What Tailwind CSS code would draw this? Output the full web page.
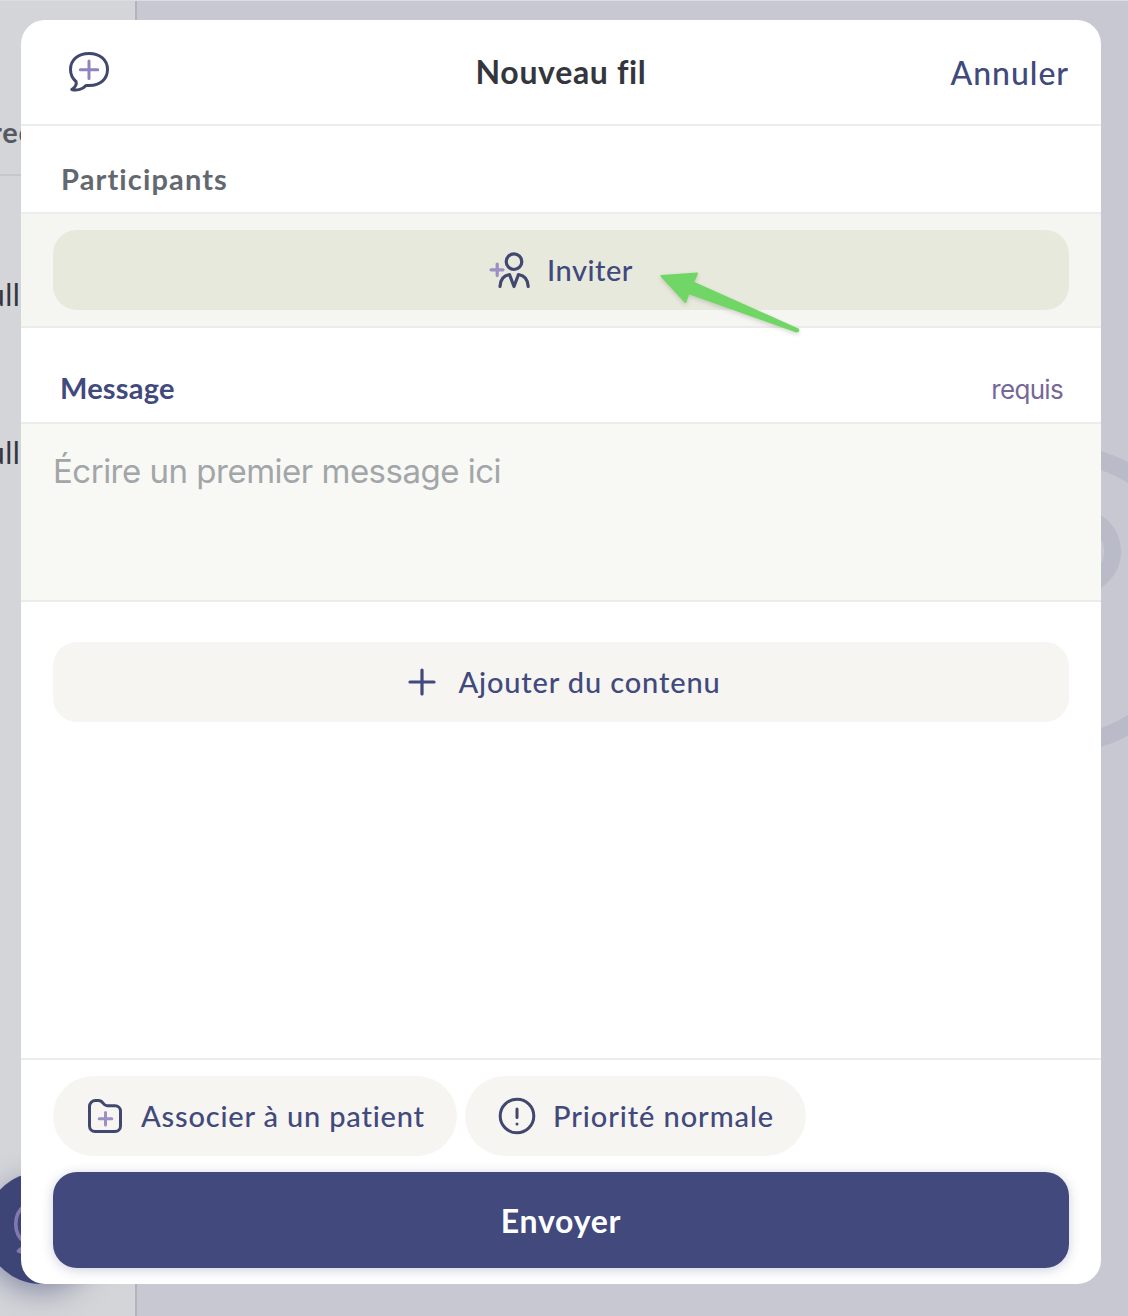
<!DOCTYPE html>
<html lang="fr">
<head>
<meta charset="utf-8">
<title>Nouveau fil</title>
<script src="https://cdn.jsdelivr.net/npm/@tailwindcss/browser@4"></script>
</head>
<body class="relative h-[1316px] w-[1128px] overflow-hidden bg-[#c8c8d2] font-['Lato',sans-serif] text-[#41497d]">

<!-- Page behind the dialog -->
<aside class="absolute inset-y-0 left-0 w-[137px] overflow-hidden border-r-2 border-[#b3b3be] bg-[#d4d5d9] text-[#33363d]">
  <div class="flex h-[176px] items-end border-b-2 border-[#c6c7cc] pb-[26px]">
    <span class="-ml-[9px] text-[29px] leading-[32px] font-bold tracking-[0.8px] text-[#555962]">rec</span>
  </div>
  <p class="-ml-[12px] mt-[102px] text-[30px] leading-[32px] tracking-[0.5px]">ull</p>
  <p class="-ml-[12px] mt-[126px] text-[30px] leading-[32px] tracking-[0.5px]">ull</p>
</aside>
<svg class="absolute right-0 top-[440px]" width="60" height="320" viewBox="1068 440 60 320" fill="none" stroke="#b9bbc8">
  <circle cx="1056" cy="599" r="145.6" stroke-width="18"/>
  <circle cx="1077.7" cy="551.5" r="34.8" stroke-width="17"/>
</svg>
<div class="absolute -left-[15px] top-[1172px] size-[112px] rounded-full bg-[#3d4576] shadow-[0_8px_28px_rgba(61,69,118,0.5)]">
  <svg class="absolute left-[27px] top-[32px]" width="48" height="52" viewBox="0 0 48 52" fill="none" stroke="#8377b1" stroke-width="3.6" stroke-linecap="round" stroke-linejoin="round">
    <path d="M12 2C1 11 1 29 12 38M12 43c-2 1-4 2-5.500 4 3 1 6 1 9 0"/>
  </svg>
</div>
<div class="absolute inset-x-0 top-0 h-px bg-[#dcdde3]"></div>

<!-- Dialog -->
<main class="absolute left-[21px] top-[20px] flex h-[1264px] w-[1080px] flex-col overflow-hidden rounded-[24px] bg-white">
  <header class="grid h-[106px] shrink-0 grid-cols-3 items-center border-b-2 border-[#ecedee] px-[32px]">
    <svg class="ml-[14px] mt-[2px]" width="44" height="44" viewBox="0 0 44 44" fill="none" stroke="#41476f" stroke-width="3" stroke-linecap="round" stroke-linejoin="round">
      <path d="M9 30.500C5.500 27.500 3.500 23.500 3.500 18.500 3.500 9 11 2.500 22 2.500S40.500 9 40.500 18.500 33 34.500 22.500 34.500H19C16 38 10 40 4.800 38.500 8 36.500 10 34 9 30.500Z"/>
      <path stroke="#9183be" d="M22 10v17.500M13.300 18.700h17.500"/>
    </svg>
    <h1 class="text-center text-[32px] leading-[40px] font-bold tracking-[0.65px] text-[#33363d]">Nouveau fil</h1>
    <button class="justify-self-end pt-[2px] text-[32px] leading-[40px] font-medium tracking-[0.95px]">Annuler</button>
  </header>

  <h2 class="flex h-[88px] shrink-0 items-end border-b-2 border-[#ececea] px-[40px] pb-[15px] text-[29px] leading-[36px] font-bold tracking-[1.13px] text-[#62686f]">Participants</h2>
  <section class="h-[114px] shrink-0 border-b-2 border-[#ebece9] bg-[#f5f6f2] px-[32px] pt-[16px]">
    <button class="flex h-[80px] w-full items-center justify-center gap-[16px] rounded-[24px] bg-[#e8e9dd] text-[29px] leading-[36px] font-medium tracking-[0.5px]">
      <svg width="42" height="38" viewBox="0 0 42 38" fill="none" stroke="#41476f" stroke-width="3.200" stroke-linecap="round" stroke-linejoin="round">
        <circle cx="25" cy="10.700" r="7.800"/>
        <path d="M11 35.500C11.200 29 14.500 24.500 20.500 23.500L25 35.500 29.500 23.500C35.500 24.500 39 29 39.200 35.500"/>
        <path stroke="#9b8fc3" d="M8.200 13v11.500M2 18.800h12"/>
      </svg>
      <span>Inviter</span>
    </button>
  </section>

  <div class="flex h-[96px] shrink-0 items-end justify-between border-b-2 border-[#ecedea] pl-[39px] pr-[38px]">
    <h2 class="pb-[16px] text-[29px] leading-[36px] font-bold tracking-[0.2px]">Message</h2>
    <span class="pb-[14px] font-['Inter',sans-serif] text-[26px] leading-[36px] tracking-[-0.7px] text-[#76679a]">requis</span>
  </div>
  <section class="h-[178px] shrink-0 border-b-2 border-[#ebece9] bg-[#f8f9f5] px-[32px] pt-[27px] font-['Inter',sans-serif] text-[33px] leading-[40px] tracking-[-0.5px] text-[#a2a6a8]">Écrire un premier message ici</section>

  <div class="flex-1 px-[32px] pt-[40px]">
    <button class="flex h-[80px] w-full items-center justify-center gap-[22px] rounded-[24px] bg-[#f6f5f2] pl-[7px] text-[29px] leading-[36px] font-medium tracking-[0.85px]">
      <svg width="28" height="28" viewBox="0 0 28 28" fill="none" stroke="currentColor" stroke-width="3.200" stroke-linecap="round"><path d="M14 2v24M2 14h24"/></svg>
      <span>Ajouter du contenu</span>
    </button>
  </div>

  <footer class="h-[226px] shrink-0 border-t-2 border-[#ecedee] px-[32px] pt-[16px]">
    <div class="flex gap-2">
      <button class="flex h-[80px] w-[404px] items-center gap-[18px] rounded-full bg-[#f6f5f2] pl-[34px] text-[29px] leading-[36px] font-medium tracking-[0.82px]">
        <svg class="shrink-0" width="36" height="36" viewBox="0 0 36 36" fill="none" stroke="#41476f" stroke-width="3" stroke-linecap="round" stroke-linejoin="round">
          <path d="M2.500 8.500a6 6 0 0 1 6-6h3C16.500 2.500 15.500 7.700 20 7.700H28a5.500 5.500 0 0 1 5.500 5.500V28a5.500 5.500 0 0 1-5.500 5.500H8a5.500 5.500 0 0 1-5.500-5.500Z"/>
          <path stroke="#9b8fc3" d="M18.500 14.500v12.500M12.200 20.700h12.600"/>
        </svg>
        <span>Associer à un patient</span>
      </button>
      <button class="flex h-[80px] w-[341px] items-center gap-[17px] rounded-full bg-[#f6f5f2] pl-[33px] text-[29px] leading-[36px] font-medium tracking-[0.92px]">
        <svg class="shrink-0" width="38" height="38" viewBox="0 0 38 38" fill="none" stroke="#41476f" stroke-width="3" stroke-linecap="round">
          <circle cx="19" cy="19" r="16.800"/><path d="M19 12v8.500M19 27v.100"/>
        </svg>
        <span>Priorité normale</span>
      </button>
    </div>
    <button class="mt-4 h-[96px] w-full rounded-[24px] bg-[#41497d] pt-[2px] text-[32px] leading-[40px] font-bold tracking-[0.75px] text-white shadow-[0_2px_12px_rgba(65,73,125,0.25)]">Envoyer</button>
  </footer>
</main>

<!-- Pointer arrow -->
<svg class="absolute left-[650px] top-[260px] drop-shadow-[0_2px_2px_rgba(0,0,0,0.15)]" width="160" height="84" viewBox="650 260 160 84" fill="#70d665" stroke="#70d665" stroke-width="2" stroke-linejoin="round">
  <path d="M661.500 276 697 273.500 693 282.500 798 329.300Q799 331.500 796.500 331.500L688.500 293 685.500 302Z"/>
</svg>
</body>
</html>
